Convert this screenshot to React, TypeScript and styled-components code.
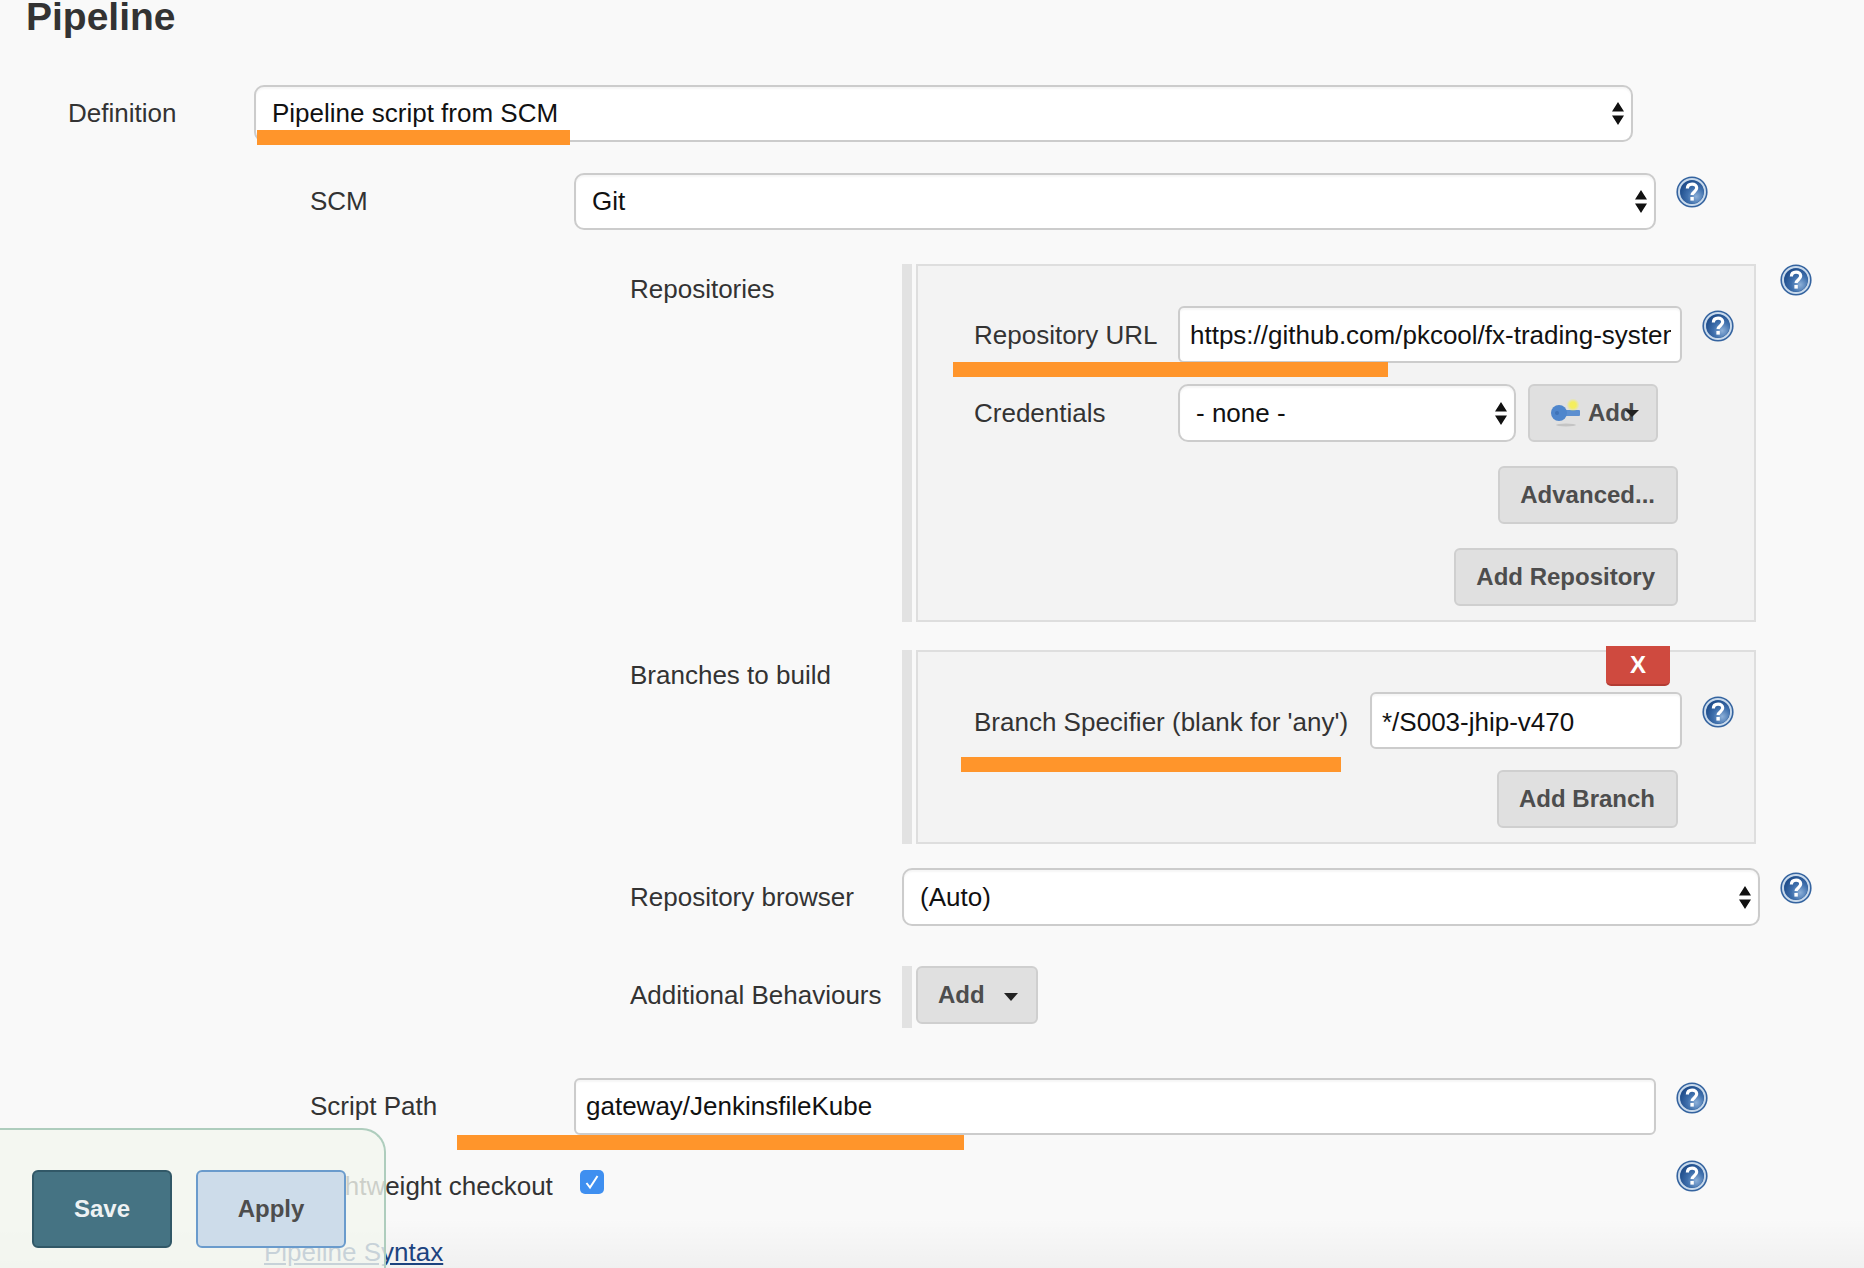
import React from "react";
import styled, { createGlobalStyle } from "styled-components";

const GlobalStyle = createGlobalStyle`
  html, body {
    margin: 0;
    padding: 0;
    background: #f9f9f9;
    overflow: hidden;
  }
  * {
    box-sizing: border-box;
  }
`;

const Page = styled.div`
  position: relative;
  width: 1864px;
  height: 1268px;
  overflow: hidden;
  font-family: "Liberation Sans", Arial, sans-serif;
  font-size: 26px;
  color: #333;
  background: #f9f9f9;
`;

const Title = styled.h1`
  margin: -5px 0 0 26px;
  font-size: 39px;
  line-height: 44px;
  font-weight: 700;
  color: #333;
`;

const Row = styled.div<{ $indent?: number; $gap: number }>`
  display: flex;
  align-items: flex-start;
  margin-top: ${(p) => p.$gap}px;
  padding-left: ${(p) => p.$indent ?? 0}px;
`;

const Label = styled.div<{ $width: number; $lineHeight?: number }>`
  flex: none;
  width: ${(p) => p.$width}px;
  line-height: ${(p) => p.$lineHeight ?? 57}px;
  white-space: nowrap;
  color: #333;
`;

const Field = styled.div<{ $width: number; $height?: number; $select?: boolean; $drop?: number }>`
  flex: none;
  display: flex;
  align-items: center;
  justify-content: space-between;
  width: ${(p) => p.$width}px;
  height: ${(p) => p.$height ?? 57}px;
  padding: ${(p) => p.$drop ?? 0}px ${(p) => (p.$select ? "7px 0 16px" : "9px 0 10px")};
  background: #fff;
  border: 2px solid #ccc;
  border-radius: ${(p) => (p.$select ? 10 : 6)}px;
  box-shadow: inset 0 2px 2px rgba(0, 0, 0, 0.04);
  color: #111;
  white-space: nowrap;
  overflow: hidden;
`;

const FieldText = styled.span`
  display: block;
  flex: 1;
  min-width: 0;
  overflow: hidden;
`;

const Rail = styled.div<{ $bottom?: number }>`
  flex: none;
  display: flex;
  border-left: 10px solid #e2e2e2;
  padding: 0 0 ${(p) => p.$bottom ?? 0}px 4px;
`;

const Panel = styled.div`
  position: relative;
  width: 840px;
  padding: 40px 0 14px 56px;
  background: #f3f3f3;
  border: 2px solid #dedede;
`;

const PanelRow = styled.div<{ $gap?: number; $height: number }>`
  display: flex;
  align-items: flex-start;
  height: ${(p) => p.$height}px;
  margin-top: ${(p) => p.$gap ?? 0}px;
`;

const ButtonRow = styled.div<{ $gap?: number }>`
  display: flex;
  justify-content: flex-end;
  margin-top: ${(p) => p.$gap ?? 24}px;
  padding-right: 76px;
`;

const Button = styled.div<{ $width?: number }>`
  position: relative;
  flex: none;
  display: flex;
  align-items: center;
  height: 58px;
  width: ${(p) => (p.$width ? `${p.$width}px` : "auto")};
  padding: 0 21px 0 20px;
  background: #e0e0e0;
  border: 2px solid #cfcfcf;
  border-radius: 6px;
  font-size: 24px;
  font-weight: 700;
  color: #4d4d4d;
  white-space: nowrap;
`;

const CredentialsAdd = styled(Button)`
  width: 130px;
  margin-left: 12px;
  padding-left: 21px;
  gap: 7px;
`;

const DeleteButton = styled.div`
  position: absolute;
  top: -6px;
  right: 84px;
  width: 64px;
  height: 40px;
  display: flex;
  align-items: center;
  justify-content: center;
  background: #cf4a3f;
  border-bottom: 2px solid #b33c33;
  border-radius: 0 0 5px 5px;
  color: #fff;
  font-size: 24px;
  font-weight: 700;
`;

const Caret = styled.svg`
  flex: none;
  margin-left: 19px;
  width: 14px;
  height: 8px;
  margin-top: 3px;
`;

const OverlapCaret = styled.svg`
  position: absolute;
  left: 95px;
  top: 24px;
  width: 14px;
  height: 7px;
`;

const CheckBox = styled.div`
  flex: none;
  width: 24px;
  height: 24px;
  margin-top: 10px;
  display: flex;
  align-items: center;
  justify-content: center;
  background: #3f8ff0;
  border-radius: 5px;
`;

const SyntaxLink = styled.a`
  display: block;
  margin: 25px 0 0 264px;
  line-height: 30px;
  color: #1d4583;
  text-decoration: underline;
`;

const HelpWrap = styled.svg<{ $left: number; $top: number }>`
  flex: none;
  width: 32px;
  height: 32px;
  margin-left: ${(p) => p.$left}px;
  margin-top: ${(p) => p.$top}px;
`;

// orange marker strokes someone painted over the screenshot
const Marker = styled.div<{ $x: number; $y: number; $w: number }>`
  position: absolute;
  left: ${(p) => p.$x}px;
  top: ${(p) => p.$y}px;
  width: ${(p) => p.$w}px;
  height: 15px;
  background: #ff952b;
`;

const BottomShade = styled.div`
  position: absolute;
  left: 0;
  right: 0;
  bottom: 0;
  height: 50px;
  background: linear-gradient(rgba(0, 0, 0, 0), rgba(0, 0, 0, 0.035));
  pointer-events: none;
`;

const SaveBar = styled.div`
  position: absolute;
  left: 0;
  bottom: 0;
  width: 386px;
  height: 140px;
  display: flex;
  gap: 24px;
  padding: 40px 0 0 32px;
  background: rgba(243, 246, 239, 0.8);
  border-top: 2px solid #aecdbd;
  border-right: 2px solid #aecdbd;
  border-radius: 0 24px 0 0;
`;

const BarButton = styled.div<{ $primary?: boolean }>`
  flex: none;
  width: ${(p) => (p.$primary ? 140 : 150)}px;
  height: 78px;
  display: flex;
  align-items: center;
  justify-content: center;
  font-size: 24px;
  font-weight: 700;
  border-radius: 6px;
  border: 2px solid ${(p) => (p.$primary ? "#315867" : "#6a9bcc")};
  background: ${(p) => (p.$primary ? "#457383" : "#cddcea")};
  color: ${(p) => (p.$primary ? "#eef2f3" : "#4d4d4d")};
`;

const Arrows = () => (
  <svg width="12" height="23" viewBox="0 0 12 23" style={{ flex: "none" }}>
    <path d="M6 0L12 9.5H0Z M0 13.5H12L6 23Z" fill="#111" />
  </svg>
);

const Help = ({ left, top, id }: { left: number; top: number; id: string }) => (
  <HelpWrap $left={left} $top={top} viewBox="0 0 32 32">
    <defs>
      <radialGradient id={id} cx="0.68" cy="0.7" r="0.75">
        <stop offset="0" stopColor="#8db0d8" />
        <stop offset="0.5" stopColor="#3f70ad" />
        <stop offset="1" stopColor="#1f4c8a" />
      </radialGradient>
      <filter id={`${id}-soft`}>
        <feGaussianBlur stdDeviation="0.35" />
      </filter>
    </defs>
    <g filter={`url(#${id}-soft)`}>
      <circle cx="16" cy="16" r="15.6" fill="#34639f" />
      <circle cx="16" cy="16" r="13" fill="none" stroke="#c9daec" strokeWidth="2" />
      <circle cx="16" cy="16" r="11.6" fill={`url(#${id})`} />
      <path
        d="M11.4 12.6c0-3 2.1-4.4 4.7-4.4 2.7 0 4.6 1.6 4.6 3.9 0 3.5-4.6 3.6-4.6 7"
        fill="none"
        stroke="#fff"
        strokeWidth="3.2"
      />
      <rect x="14.4" y="21" width="3.4" height="3.6" fill="#fff" />
    </g>
  </HelpWrap>
);

const KeyIcon = () => (
  <svg width="30" height="28" viewBox="0 0 30 28" style={{ flex: "none" }}>
    <defs>
      <radialGradient id="sparkle">
        <stop offset="0.45" stopColor="#f4ee5e" />
        <stop offset="1" stopColor="#f4ee5e" stopOpacity="0" />
      </radialGradient>
      <filter id="key-soft">
        <feGaussianBlur stdDeviation="0.5" />
      </filter>
    </defs>
    <g filter="url(#key-soft)">
      <ellipse cx="15" cy="26" rx="10" ry="1.4" fill="#c4c4c4" />
      <rect x="10" y="11" width="19" height="6" rx="1" fill="#5b8fd0" />
      <circle cx="8" cy="14" r="8" fill="#4f86cc" />
      <circle cx="6" cy="14" r="2" fill="#3f73b8" />
    </g>
    <circle cx="22" cy="6" r="6.5" fill="url(#sparkle)" />
  </svg>
);

const App = () => {
  return (
    <Page>
      <GlobalStyle />
      <Title>Pipeline</Title>

      <Row $gap={46} $indent={68}>
        <Label $width={186}>Definition</Label>
        <Field $width={1379} $select>
          <FieldText>Pipeline script from SCM</FieldText>
          <Arrows />
        </Field>
      </Row>

      <Row $gap={31} $indent={310}>
        <Label $width={264}>SCM</Label>
        <Field $width={1082} $select>
          <FieldText>Git</FieldText>
          <Arrows />
        </Field>
        <Help id="h1" left={20} top={3} />
      </Row>

      <Row $gap={34} $indent={630}>
        <Label $width={272} $lineHeight={50}>
          Repositories
        </Label>
        <Rail>
          <Panel>
            <PanelRow $height={57}>
              <Label $width={204} $lineHeight={59}>
                Repository URL
              </Label>
              <Field $width={504} $drop={2}>
                <FieldText>https://github.com/pkcool/fx-trading-system.git</FieldText>
              </Field>
              <Help id="h2" left={20} top={4} />
            </PanelRow>
            <PanelRow $gap={21} $height={58}>
              <Label $width={204} $lineHeight={58}>
                Credentials
              </Label>
              <Field $width={338} $height={58} $select>
                <FieldText>- none -</FieldText>
                <Arrows />
              </Field>
              <CredentialsAdd>
                <KeyIcon />
                Add
                <OverlapCaret viewBox="0 0 14 7">
                  <path d="M0 0H14L7 7Z" fill="#222" />
                </OverlapCaret>
              </CredentialsAdd>
            </PanelRow>
            <ButtonRow>
              <Button>Advanced...</Button>
            </ButtonRow>
            <ButtonRow>
              <Button>Add Repository</Button>
            </ButtonRow>
          </Panel>
        </Rail>
        <Help id="h3" left={24} top={0} />
      </Row>

      <Row $gap={28} $indent={630}>
        <Label $width={272} $lineHeight={50}>
          Branches to build
        </Label>
        <Rail>
          <Panel>
            <DeleteButton>X</DeleteButton>
            <PanelRow $height={57}>
              <Label $width={396} $lineHeight={61}>
                Branch Specifier (blank for 'any')
              </Label>
              <Field $width={312} $drop={4}>
                <FieldText>*/S003-jhip-v470</FieldText>
              </Field>
              <Help id="h4" left={20} top={4} />
            </PanelRow>
            <ButtonRow $gap={21}>
              <Button>Add Branch</Button>
            </ButtonRow>
          </Panel>
        </Rail>
      </Row>

      <Row $gap={24} $indent={630}>
        <Label $width={272} $lineHeight={58}>
          Repository browser
        </Label>
        <Field $width={858} $height={58} $select>
          <FieldText>(Auto)</FieldText>
          <Arrows />
        </Field>
        <Help id="h5" left={20} top={4} />
      </Row>

      <Row $gap={40} $indent={630}>
        <Label $width={272} $lineHeight={58}>
          Additional Behaviours
        </Label>
        <Rail $bottom={4}>
          <Button $width={122}>
            Add
            <Caret viewBox="0 0 14 8">
              <path d="M0 0H14L7 8Z" fill="#222" />
            </Caret>
          </Button>
        </Rail>
      </Row>

      <Row $gap={50} $indent={310}>
        <Label $width={264}>Script Path</Label>
        <Field $width={1082}>
          <FieldText>gateway/JenkinsfileKube</FieldText>
        </Field>
        <Help id="h6" left={20} top={4} />
      </Row>

      <Row $gap={25} $indent={310}>
        <Label $width={270} $lineHeight={52}>
          Lightweight checkout
        </Label>
        <CheckBox>
          <svg width="16" height="16" viewBox="0 0 16 16">
            <path d="M2.5 9l3.5 4.5L13.5 2" fill="none" stroke="#fff" strokeWidth="2" />
          </svg>
        </CheckBox>
        <Help id="h7" left={1072} top={0} />
      </Row>

      <SyntaxLink>Pipeline Syntax</SyntaxLink>

      <Marker $x={257} $y={130} $w={313} />
      <Marker $x={953} $y={362} $w={435} />
      <Marker $x={961} $y={757} $w={380} />
      <Marker $x={457} $y={1135} $w={507} />

      <BottomShade />

      <SaveBar>
        <BarButton $primary>Save</BarButton>
        <BarButton>Apply</BarButton>
      </SaveBar>
    </Page>
  );
};

export default App;
